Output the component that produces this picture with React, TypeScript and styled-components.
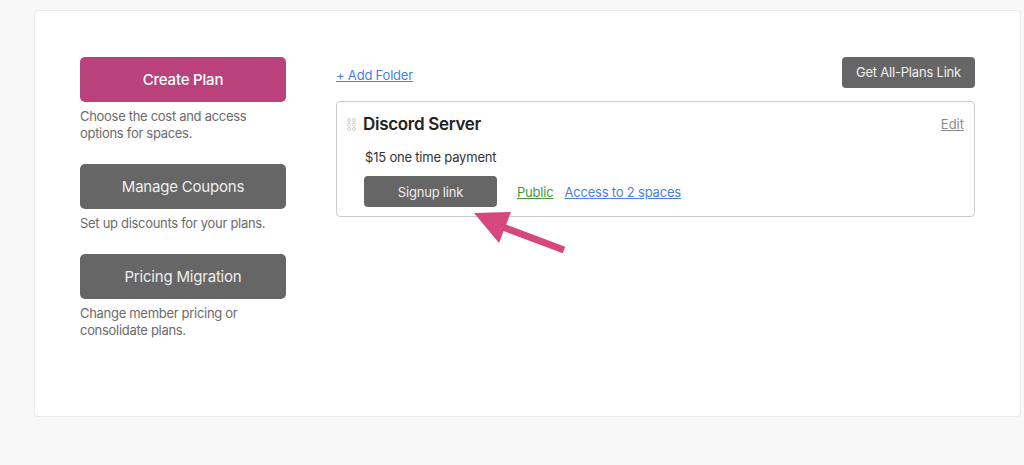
import styled, { createGlobalStyle } from 'styled-components'

const GlobalStyle = createGlobalStyle`
  body {
    margin: 0;
    background: #f8f8f8;
    font-family: Inter, 'Open Sans', sans-serif;
  }
`

const actions = [
  { label: 'Create Plan', text: 'Choose the cost and access options for spaces.', primary: true },
  { label: 'Manage Coupons', text: 'Set up discounts for your plans.', primary: false },
  { label: 'Pricing Migration', text: 'Change member pricing or consolidate plans.', primary: false },
]

const DragHandle = () => (
  <svg width="9" height="13" viewBox="0 0 9 13" fill="none" stroke="#cfcfcf" strokeWidth="1">
    {[2, 6.5, 11].map((y) => (
      <g key={y}>
        <circle cx="2" cy={y} r="1.5" />
        <circle cx="7" cy={y} r="1.5" />
      </g>
    ))}
  </svg>
)

const Arrow = () => (
  <ArrowSvg width="100" height="50" viewBox="0 0 100 50">
    <line x1="36" y1="21" x2="97" y2="44" stroke="#d6487d" strokeWidth="7" />
    <polygon points="7,7 44,6 32,37" fill="#d6487d" />
  </ArrowSvg>
)

export default function App() {
  return (
    <>
      <GlobalStyle />
      <Panel>
        <Sidebar>
          {actions.map((a) => (
            <Action key={a.label}>
              <ActionButton $primary={a.primary}>{a.label}</ActionButton>
              <ActionText>{a.text}</ActionText>
            </Action>
          ))}
        </Sidebar>
        <Main>
          <TopRow>
            <AddFolder href="#">+ Add Folder</AddFolder>
            <SmallButton>Get All-Plans Link</SmallButton>
          </TopRow>
          <PlanCard>
            <TitleRow>
              <TitleGroup>
                <DragHandle />
                <PlanTitle>Discord Server</PlanTitle>
              </TitleGroup>
              <EditLink href="#">Edit</EditLink>
            </TitleRow>
            <Price>$15 one time payment</Price>
            <LinkRow>
              <SmallButton>Signup link</SmallButton>
              <TextLink href="#" $color="#3f9a3a">Public</TextLink>
              <TextLink href="#" $color="#4a7fe0">Access to 2 spaces</TextLink>
            </LinkRow>
            <Arrow />
          </PlanCard>
        </Main>
      </Panel>
    </>
  )
}

const Panel = styled.div`
  display: grid;
  grid-template-columns: 206px 639px;
  column-gap: 50px;
  box-sizing: border-box;
  width: 987px;
  height: 407px;
  margin: 10px 0 0 34px;
  padding: 46px 0 0 45px;
  background: #fff;
  border: 1px solid #e9e9e9;
  border-radius: 4px;
`

const Sidebar = styled.div`
  display: flex;
  flex-direction: column;
  row-gap: 22px;
`

const Action = styled.div`
  display: flex;
  flex-direction: column;
  row-gap: 6px;
`

const ActionButton = styled.button<{ $primary: boolean }>`
  height: 45px;
  border: none;
  border-radius: 5px;
  background: ${({ $primary }) => ($primary ? '#b9427d' : '#666666')};
  color: ${({ $primary }) => ($primary ? '#fff' : '#eeeeee')};
  font-family: inherit;
  font-size: 15px;
  font-weight: ${({ $primary }) => ($primary ? 500 : 400)};
  letter-spacing: -0.2px;
`

const ActionText = styled.p`
  margin: 0;
  font-size: 13px;
  line-height: 17px;
  letter-spacing: -0.3px;
  color: #6b6b6b;
`

const Main = styled.div`
  display: flex;
  flex-direction: column;
  row-gap: 14px;
`

const TopRow = styled.div`
  display: flex;
  justify-content: space-between;
  align-items: center;
  height: 30px;
`

const AddFolder = styled.a`
  font-size: 13px;
  letter-spacing: -0.2px;
  color: #4a7fe0;
  padding-top: 6px;
`

const SmallButton = styled.button`
  height: 31px;
  width: 133px;
  border: none;
  border-radius: 4px;
  background: #666666;
  color: #eeeeee;
  font-family: inherit;
  font-size: 13px;
  letter-spacing: -0.2px;
`

const PlanCard = styled.div`
  position: relative;
  display: flex;
  flex-direction: column;
  box-sizing: border-box;
  height: 116px;
  padding: 12px 10px 0 10px;
  border: 1px solid #cccccc;
  border-radius: 4px;
`

const TitleRow = styled.div`
  display: flex;
  justify-content: space-between;
  align-items: center;
`

const TitleGroup = styled.div`
  display: flex;
  align-items: center;
  column-gap: 7px;
`

const PlanTitle = styled.h3`
  margin: 0;
  font-size: 17px;
  font-weight: 600;
  letter-spacing: -0.3px;
  color: #222;
`

const EditLink = styled.a`
  font-size: 13px;
  color: #8a8a8a;
`

const Price = styled.div`
  margin: 15px 0 0 18px;
  font-size: 13px;
  letter-spacing: -0.2px;
  color: #333;
`

const LinkRow = styled.div`
  display: flex;
  align-items: center;
  column-gap: 20px;
  margin: 11px 0 0 17px;
`

const TextLink = styled.a<{ $color: string }>`
  font-size: 13px;
  letter-spacing: -0.2px;
  color: ${({ $color }) => $color};
  & + & {
    margin-left: -9px;
  }
`

const ArrowSvg = styled.svg`
  position: absolute;
  left: 130px;
  top: 104px;
`
